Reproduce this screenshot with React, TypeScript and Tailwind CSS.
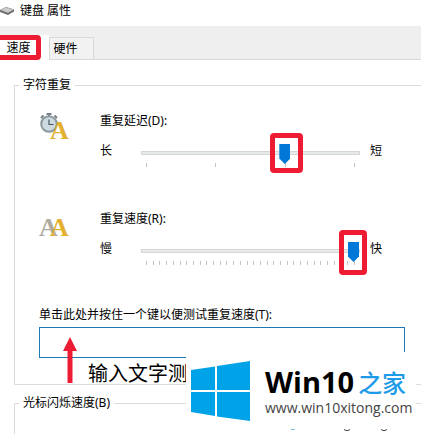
import { type ReactNode } from 'react';

const repeatSettings = [
  { id: 'delay', icon: 'clock', label: '重复延迟(D):', low: '长', high: '短', max: 3, value: 2, highlight: 'left-[129px] -top-[10px] h-10 w-[33px]' },
  { id: 'rate', icon: 'letters', label: '重复速度(R):', low: '慢', high: '快', max: 31, value: 31, highlight: 'left-[198px] -top-[11px] h-[45px] w-[28px]' },
];

function KeyboardIcon() {
  return (
    <svg viewBox="0 0 16 10" className="h-[10px] w-4 shrink-0">
      <path d="M0 4 L6 1 L14 3.500 L14 5.500 L8 9 L0 6Z" fill="#6b6b6b" />
      <path d="M0 4 L6 1 L14 3.500 L8 7Z" fill="#b9b9b9" />
      <path d="M3 3.500 L9 5.500 M5 2.500 L11 4.500" stroke="#e6e6e6" strokeWidth="0.7" />
    </svg>
  );
}

function SettingIcon({ kind }: { kind: string }) {
  return (
    <svg viewBox="0 0 30 30" aria-hidden="true" className="h-[30px] w-[30px] shrink-0 font-['Liberation_Serif',serif] text-[26px] font-bold">
      {kind === 'clock' ? (
        <>
          <path d="M7.500 1 H12.500 M10 1.500 V4 M2 5 L4.500 2.500 M15.500 2.500 L18 5" stroke="#77828a" strokeWidth="2" />
          <circle cx="10" cy="11" r="7.800" fill="#cddae1" stroke="#8d989f" strokeWidth="2" />
          <path d="M10 6.500 V11.500 H14.500" fill="none" stroke="#4a5961" strokeWidth="1.200" />
          <text x="11" y="26" fill="#e3b02f">A</text>
        </>
      ) : (
        <text y="25">
          <tspan x="0" fill="#aeaba0">A</tspan>
          <tspan x="11" fill="#e3b02f">A</tspan>
        </text>
      )}
    </svg>
  );
}

function Group({ title, children, className }: { title: string; children?: ReactNode; className: string }) {
  return (
    <fieldset className={`-mr-4 ml-[14px] border border-[#dcdcdc] ${className}`}>
      <legend className="ml-1 px-1 leading-4">{title}</legend>
      {children}
    </fieldset>
  );
}

function Watermark() {
  return (
    <div className="absolute left-[186px] top-[352px] h-[82px] w-[230px] bg-white">
      <div className="flex h-[77px] items-center gap-[15px] pl-[5px]">
        <svg viewBox="0 0 59 60" className="h-[60px] w-[59px] shrink-0" fill="#00a2e8">
          <path d="M0 9 L24 5.500 V29 H0Z M26 5 L59 0 V29 H26Z M0 31 H24 V55 L0 51Z M26 31 H59 V60 L26 55.500Z" />
        </svg>
        <div className="whitespace-nowrap pt-0.5">
          <div className="flex items-center gap-1">
            <span className="font-['Open_Sans',sans-serif] text-[29px] leading-8 font-bold text-black">Win10</span>
            <span className="font-['Noto_Sans_CJK_SC',sans-serif] text-2xl leading-8 font-medium text-[#1e9be8]">之家</span>
          </div>
          <a href="#home" className="block font-['Open_Sans',sans-serif] text-sm leading-5 text-[#444]">www.win10xitong.com</a>
        </div>
      </div>
      {/* Tops of the caption cut off by the banner */}
      <svg viewBox="0 0 230 5" className="h-[5px] w-[230px]">
        <path d="M105 0.500 H109" stroke="#7fc0dc" />
        <path d="M158 0.500 L160 1.500 H162 L164 0.500 M195 0.500 L197 1.500 H199 L201 0.500" fill="none" stroke="#444" />
      </svg>
    </div>
  );
}

export default function App() {
  return (
    <div className="relative flex min-h-screen flex-col overflow-hidden bg-white font-['Noto_Sans','Noto_Sans_CJK_SC',sans-serif] text-xs leading-4 text-black">
      <header className="flex h-[26px] items-center gap-1 pb-1">
        <KeyboardIcon />
        <h1>键盘 属性</h1>
      </header>

      {/* Tabs */}
      <div role="tablist" className="flex h-[34px] items-end border-b border-[#d9d9d9] bg-[#efefef]">
        <button role="tab" aria-selected="true" className="relative -mb-px h-[25px] w-[49px] bg-white pr-3">
          速度
          <span className="absolute -left-2 top-0 h-[25px] w-[49px] rounded border-5 border-[#ed1c32]" />
        </button>
        <button role="tab" aria-selected="false" className="h-[22px] w-[45px] border border-b-0 border-[#d9d9d9] bg-[#f2f2f2] pr-3">硬件</button>
      </div>

      <main className="flex flex-1 flex-col pt-[17px]">
        <Group title="字符重复" className="h-[308px]">
          <div className="pr-[31px] pl-6">
            {repeatSettings.map((s) => (
              <div key={s.id} className="flex h-[98px] gap-[31px] pt-5">
                <SettingIcon kind={s.icon} />
                <div className="shrink-0">
                  <label htmlFor={s.id} className="block pb-[14px]">{s.label}</label>
                  <div className="flex items-start">
                    <span className="w-[41px]">{s.low}</span>
                    <div className="relative w-[219px]">
                      <input
                        id={s.id}
                        type="range"
                        min={0}
                        max={s.max}
                        defaultValue={s.value}
                        className="block h-5 w-full appearance-none bg-transparent [&::-webkit-slider-runnable-track]:h-1 [&::-webkit-slider-runnable-track]:border [&::-webkit-slider-runnable-track]:border-[#d6d6d6] [&::-webkit-slider-runnable-track]:bg-[#e7eaea] [&::-webkit-slider-thumb]:-mt-2 [&::-webkit-slider-thumb]:h-5 [&::-webkit-slider-thumb]:w-[11px] [&::-webkit-slider-thumb]:appearance-none [&::-webkit-slider-thumb]:bg-[#0078d7] [&::-webkit-slider-thumb]:[clip-path:polygon(0_0,100%_0,100%_72%,50%_100%,0_72%)]"
                      />
                      <div className="flex justify-between px-[5px]">
                        {Array.from({ length: s.max + 1 }, (_, i) => (
                          <span key={i} className="h-1 w-px bg-[#c4c4c4]" />
                        ))}
                      </div>
                      <span className={`pointer-events-none absolute rounded border-5 border-[#ed1c32] ${s.highlight}`} />
                    </div>
                    <span className="ml-[10px]">{s.high}</span>
                  </div>
                </div>
              </div>
            ))}

            <label htmlFor="test" className="block pt-[18px] pb-1">单击此处并按住一个键以便测试重复速度(T):</label>
            <div className="relative">
              <input id="test" type="text" className="block h-[31px] w-full border border-[#1c78b4] bg-white px-2 outline-none" />
              <svg viewBox="0 0 14 46" className="absolute top-[10px] left-6 h-[46px] w-[14px]" fill="#ed1c32">
                <path d="M7 0 L14 14 H9.500 V46 H4.500 V14 H0Z" />
              </svg>
              <p className="pt-1 pl-[49px] text-xl leading-6">输入文字测</p>
            </div>
          </div>
        </Group>

        <Group title="光标闪烁速度(B)" className="mt-[10px] flex-1 border-b-0" />
      </main>

      <Watermark />
    </div>
  );
}
